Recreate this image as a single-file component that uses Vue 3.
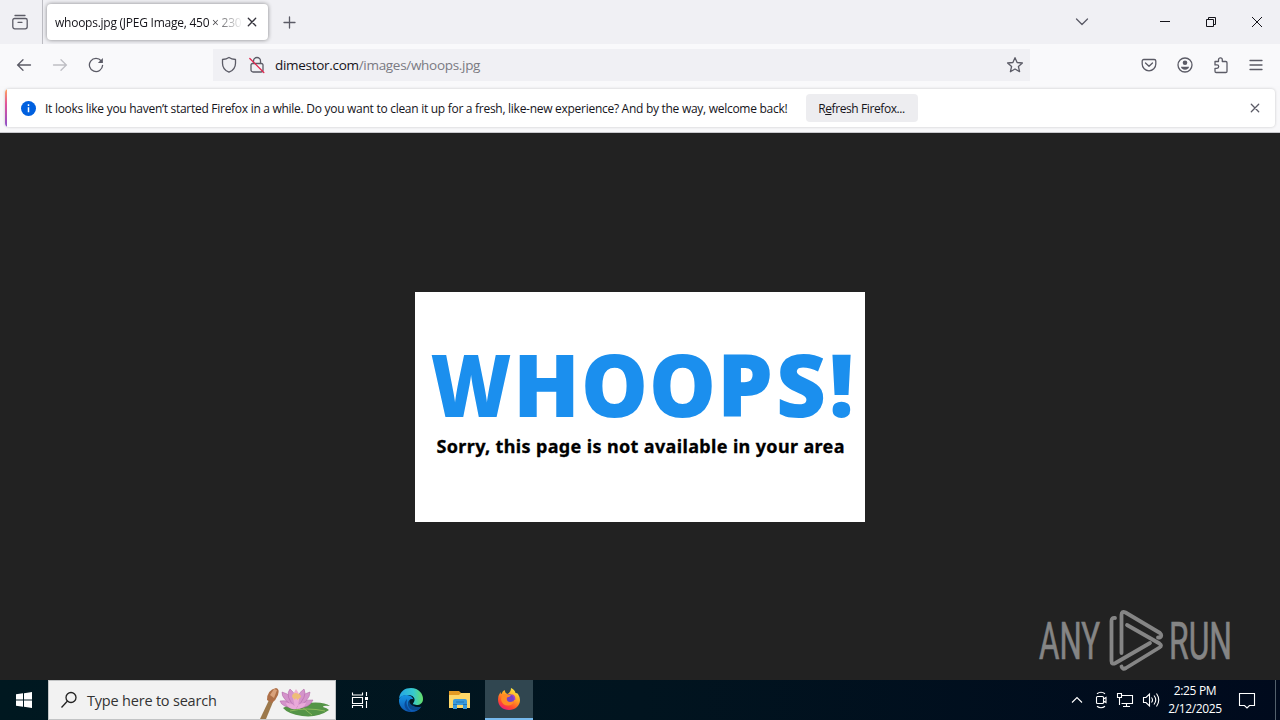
<template>
  <div class="screen">
    <!-- 标签栏 -->
    <header class="tab-bar">
      <div class="firefox-view">
        <svg width="18" height="18" viewBox="0 0 18 18" class="line">
          <path d="M4 2.5h10M3.5 5.5h11a1.7 1.7 0 0 1 1.7 1.7v6.6a2 2 0 0 1-2 2H3.8a2 2 0 0 1-2-2V7.2a1.7 1.7 0 0 1 1.7-1.7zM7 9.3h4" />
        </svg>
      </div>
      <div class="tab">
        <span class="tab-title">whoops.jpg (JPEG Image, 450 × 230 pixels)</span>
        <svg width="10" height="10" viewBox="0 0 10 10" class="line dark"><path d="M1.300 1.300l7.400 7.400M8.700 1.300L1.300 8.700" /></svg>
      </div>
      <svg class="line new-tab" width="13" height="13" viewBox="0 0 13 13"><path d="M6.5 1v11M1 6.500h11" /></svg>
      <svg class="line all-tabs" width="14" height="8" viewBox="0 0 14 8"><path d="M1.5 1L7 6.5 12.5 1" /></svg>
      <div class="window-buttons">
        <svg width="12" height="12" viewBox="0 0 12 12"><path d="M1 5.5h10" /></svg>
        <svg width="12" height="12" viewBox="0 0 12 12"><path d="M1.5 3.5h7v7h-7zM3.5 3.5v-2h7v7h-2" /></svg>
        <svg width="12" height="12" viewBox="0 0 12 12"><path d="M1 1l10 10M11 1L1 11" /></svg>
      </div>
    </header>

    <!-- 导航栏 -->
    <nav class="nav-bar">
      <div class="nav-left">
        <svg width="16" height="16" viewBox="0 0 16 16" class="line"><path d="M14.500 8H1.500M7 2.700L1.700 8 7 13.300" /></svg>
        <svg width="16" height="16" viewBox="0 0 16 16" class="line disabled"><path d="M1.500 8h13M9 2.700L14.300 8 9 13.300" /></svg>
        <svg width="16" height="16" viewBox="0 0 16 16" class="line">
          <path d="M13.300 4A6.600 6.600 0 1 0 14.600 8.300" />
          <path d="M14.900 1v5h-5z" class="filled" />
        </svg>
      </div>
      <div class="url-bar">
        <svg width="16" height="18" viewBox="0 0 16 18" class="line"><path d="M8 1.500C6 2.800 3.600 3.300 1.500 3.500v3.700c0 4.200 2.600 7.400 6.500 9 3.900-1.600 6.500-4.800 6.500-9V3.500C12.400 3.300 10 2.800 8 1.500z" /></svg>
        <svg width="16" height="18" viewBox="0 0 16 18" class="line lock">
          <path d="M4.500 7.500V5a3.500 3.500 0 0 1 7 0v2.500M3.500 7.500h9a1.500 1.500 0 0 1 1.500 1.500v5a2 2 0 0 1-2 2H4a2 2 0 0 1-2-2V9a1.500 1.500 0 0 1 1.500-1.500z" />
          <path d="M.8 2.500l14 14" class="strike" />
        </svg>
        <span class="url"><b>dimestor.com</b>/images/whoops.jpg</span>
        <svg width="18" height="18" viewBox="0 0 18 18" class="line star"><path d="M9 1.700l2.100 4.800 5.300.5-4 3.500 1.200 5.200L9 13l-4.600 2.700 1.200-5.200-4-3.500 5.300-.5z" /></svg>
      </div>
      <div class="nav-right">
        <svg width="16" height="16" viewBox="0 0 16 16" class="line"><path d="M2.800 2.500h10.400a1.600 1.600 0 0 1 1.600 1.600V7a6.800 6.800 0 0 1-13.600 0V4.100a1.600 1.600 0 0 1 1.600-1.600zM4.500 6L8 9.300 11.500 6" /></svg>
        <svg width="16" height="16" viewBox="0 0 16 16" class="line">
          <circle cx="8" cy="8" r="7" />
          <circle cx="8" cy="5.800" r="2.300" class="filled" />
          <path d="M4 9.800h8c0 1.600-1.800 2.900-4 2.900s-4-1.300-4-2.900z" class="filled" />
        </svg>
        <svg width="16" height="18" viewBox="0 0 16 18" class="line"><path d="M2 5.500h3.500V3.700a1.900 1.900 0 0 1 3.800 0v1.800h3.500a1.200 1.200 0 0 1 1.200 1.200v8.600a1.200 1.200 0 0 1-1.200 1.200H3.200A1.200 1.200 0 0 1 2 15.300v-3h2a1.700 1.700 0 0 0 0-3.400H2z" /></svg>
        <svg width="14" height="14" viewBox="0 0 14 14" class="line"><path d="M1 2.500h12M1 7h12M1 11.500h12" /></svg>
      </div>
    </nav>

    <!-- 通知栏 -->
    <section class="notice-area">
      <div class="notice">
        <svg width="15" height="15" viewBox="0 0 15 15">
          <circle cx="7.500" cy="7.500" r="7.500" fill="#0060df" />
          <path d="M7.500 3.300v1.600M7.500 6.300v5" stroke="#fff" stroke-width="1.500" />
        </svg>
        <span class="notice-text">It looks like you haven’t started Firefox in a while. Do you want to clean it up for a fresh, like-new experience? And by the way, welcome back!</span>
        <button class="refresh"><span>R<u>e</u>fresh Firefox...</span></button>
        <svg width="10" height="10" viewBox="0 0 10 10" class="line notice-close"><path d="M1.300 1.300l7.400 7.400M8.700 1.300L1.300 8.700" /></svg>
      </div>
    </section>

    <!-- 图片内容 -->
    <main class="viewer">
      <svg class="picture" width="450" height="230" viewBox="0 0 450 230">
        <rect width="450" height="230" fill="#fff" />
        <g class="headline">
          <text
            v-for="(item, index) in headline"
            :key="index"
            :x="item.x"
            y="125"
            :textLength="item.width"
            lengthAdjust="spacingAndGlyphs"
          >{{ item.letter }}</text>
        </g>
        <text class="subline" x="21.500" y="161" textLength="408" lengthAdjust="spacing">Sorry, this page is not available in your area</text>
      </svg>

      <!-- 右下角水印 -->
      <svg class="watermark" width="205" height="70" viewBox="0 0 205 70">
        <text x="4" y="54" textLength="61" lengthAdjust="spacingAndGlyphs">ANY</text>
        <text x="134" y="54" textLength="63" lengthAdjust="spacingAndGlyphs">RUN</text>
        <g class="mark">
          <path d="M80 13q-3.500-.5-3.500 3v40q0 4 4 2L115 38" />
          <path d="M86.500 48V10q0-4.500 4-2.500l34.500 20.500q2.500 2.500 0 4.500l-2 0" />
          <path d="M92 20l32.500 18.500q3 2 0 4L91 63q-3.500 2-4.500-1.500" />
        </g>
      </svg>
    </main>

    <!-- 任务栏 -->
    <footer class="taskbar">
      <div class="start">
        <svg width="16" height="16" viewBox="0 0 16 16" fill="#fff"><path d="M0 2.300L7 1.300v6.200H0zM8 1.200L16 0v7.500H8zM0 8.500h7v6.200l-7-1zM8 8.500h8V16l-8-1.200z" /></svg>
      </div>
      <div class="search">
        <svg width="18" height="18" viewBox="0 0 18 18" class="magnifier"><circle cx="11" cy="6.500" r="5" /><path d="M7.500 10L1.500 16.500" /></svg>
        <span>Type here to search</span>
        <svg class="lotus" width="76" height="38" viewBox="0 0 76 38">
          <path d="M1 38L10 19l4 2-7 17z" fill="#9c794c" />
          <path d="M8 19q0-10 9-12 4 1 2 7-2 5-6 8z" fill="#ae7048" />
          <path d="M11 14l4-6 3 1-3 8z" fill="#d9a27b" />
          <path d="M24 27q8-5 23-5 18-2 24 3-7-1-7 1 4 1 6 3-11 8-27 6-14-2-19-8z" fill="#559447" />
          <path d="M31 30q17-4 35 0M43 26l10 8" fill="none" stroke="#8dbb5c" />
          <g fill="#d493cb" stroke="#ad5fa3" stroke-width=".5">
            <path d="M37 27q-14 0-16-7 10-2 16 7z" /><path d="M37 27q13 1 17-8-10-1-17 8z" />
            <path d="M37 27Q22 18 23 11q10 2 14 16z" /><path d="M37 27q14-7 14-16-10 2-14 16z" />
            <path d="M37 27q-12-12-6-19 8 6 6 19z" /><path d="M37 27q12-12 8-19-9 6-8 19z" />
          </g>
          <path d="M37 25q-6-9 0-17 7 8 0 17z" fill="#efb1cf" />
          <path d="M33 16q0-4 4-4 5 1 5 4l-5 4z" fill="#eebd78" />
          <path d="M37 28q-8 1-10-6 8-1 10 6zm0 0q8 0 10-6-8-1-10 6zm0 0q-4-6 0-11 5 6 0 11z" fill="#e9a9da" />
        </svg>
      </div>
      <div class="app">
        <svg width="18" height="18" viewBox="0 0 18 18" class="tray-line"><path d="M1.500 1.500V4h10V1.500M1.500 6.500h10v6h-10zM1.500 17v-2.500h10V17M15.500 1v4M15.500 10v7" /><path d="M14 6h3v3h-3z" class="solid" /></svg>
      </div>
      <div class="app edge">
        <svg width="26" height="26" viewBox="0 0 26 26">
          <defs>
            <linearGradient id="edgeTop" x1="0" y1="0" x2="1" y2="0"><stop stop-color="#23a4e5" /><stop offset=".6" stop-color="#37c9ce" /><stop offset="1" stop-color="#65df68" /></linearGradient>
            <linearGradient id="edgeLow" x1="0" y1="0" x2="0" y2="1"><stop stop-color="#1595e4" /><stop offset="1" stop-color="#0d57b2" /></linearGradient>
          </defs>
          <path d="M1 11.500C2 4 7 1 13 1c8 0 12 6 12 11 0 4-3 6-6.500 6-3 0-4.200-1.200-3-2.400 2.500-3 .5-7-4-7.600C7 7.500 3 9 1 11.500z" fill="url(#edgeTop)" />
          <path d="M1 12.500C2 9 5.500 7.700 9 8c3.500.3 6 2.300 6.500 4.500-5-2-7 5-3 8.500 3 2.300 7 2 10.500-1-2 3-5.500 5-9.500 5C5 25 .5 19 1 12.500z" fill="url(#edgeLow)" />
          <path d="M9 12q-2 8 4.500 13C7 24 4 17 9 12z" fill="#0a4a98" />
          <path d="M12 12.500q-3 3-1.500 7 3 5 9 3.500 2.500-1 4-3.500-5 1.500-8.500-1-2.500-3 0-4.500-.500-2-3-1.500z" fill="#0b4a8c" />
          <path d="M15 12q-3.500-.5-3.500 3 .5 2.500 3.500 4-1-2 .2-3.200 1-1.500-.2-3.800z" fill="#021820" />
        </svg>
      </div>
      <div class="app">
        <svg width="24" height="22" viewBox="0 0 24 22">
          <path d="M1 2h10l2 2h9v5H1z" fill="#e49b23" />
          <path d="M1 6h10l2-2h9v15H1z" fill="#ffd869" />
          <path d="M5 20v-8q0-2 2-2h10q2 0 2 2v8h-4v-4H9v4z" fill="#3c9bdb" />
          <path d="M5 15.500h4M15 15.500h4M8 13h8" stroke="#2376b3" />
        </svg>
      </div>
      <div class="app active">
        <svg width="24" height="24" viewBox="0 0 24 24">
          <defs><linearGradient id="fox" x1=".8" y1="0" x2=".25" y2="1"><stop stop-color="#fff044" /><stop offset=".4" stop-color="#ffa522" /><stop offset=".75" stop-color="#ff4b2b" /><stop offset="1" stop-color="#ed1681" /></linearGradient></defs>
          <path d="M14 1q4 2 4.500 5 2 0 2.500 1 2 3 2 6c0 6-5 10-11 10S1 19 1 12.500q0-4 2.500-7.500 0 2 1 2 1-3 3-4 .5 3 3 4Q14 5 14 1z" fill="url(#fox)" />
          <circle cx="12.500" cy="12" r="4.800" fill="#7542c8" />
          <path d="M5 7.500q3-1 6 .5h3q-1 2-4 2.500-1 4 3 4.500 2 0 4-1.500-1 5-6 5-6 0-7-6z" fill="#ff8b25" />
          <path d="M15 8q3 1 2.500 5" fill="none" stroke="#a644c7" stroke-width="1.500" />
        </svg>
      </div>
      <div class="tray">
        <svg width="12" height="8" viewBox="0 0 12 8" class="tray-line"><path d="M1 6.500l5-5 5 5" /></svg>
        <svg width="14" height="18" viewBox="0 0 14 18" class="tray-line"><path d="M3.500 5.500h5a1 1 0 0 1 1 1v5a1 1 0 0 1-1 1h-5a1 1 0 0 1-1-1v-5a1 1 0 0 1 1-1zM9.500 8l2.500-1.500v5L9.500 10M3 2.700q4-3 8 0M3 15.300q4 3 8 0" /></svg>
        <svg width="18" height="16" viewBox="0 0 18 16" class="tray-line"><path d="M6 3.500h10.500v8H5.500M10.500 11.500v3M7 14.500h7M1.500 1.500h4v4h-4zM3.500 5.500v7.500" /></svg>
        <svg width="18" height="16" viewBox="0 0 18 16" class="tray-line"><path d="M1.500 5.500h2.500l3.500-3.500v12L4 10.500H1.500zM9.500 5.500q2 2.500 0 5M12 3.500q3.500 4.500 0 9M14.500 1.500q4.500 6.500 0 13" /></svg>
      </div>
      <div class="clock">
        <span>2:25 PM</span>
        <span class="date">2/12/2025</span>
      </div>
      <svg width="18" height="18" viewBox="0 0 18 18" class="tray-line action"><path d="M1.500 2.500h15v12h-5l-2.500 2.500-2.500-2.500h-5z" /></svg>
      <i class="show-desktop"></i>
    </footer>
  </div>
</template>

<script setup>
// 标题每个字母的位置和宽度
const headline = [
  { letter: "W", x: 15.5, width: 81 },
  { letter: "H", x: 98, width: 67 },
  { letter: "O", x: 166, width: 67 },
  { letter: "O", x: 234, width: 67 },
  { letter: "P", x: 302, width: 56 },
  { letter: "S", x: 361, width: 50 },
  { letter: "!", x: 414, width: 25 },
];
</script>

<style>
body {
  margin: 0;
  overflow: hidden;
}
</style>

<style scoped>
.screen {
  width: 1280px;
  height: 720px;
  display: flex;
  flex-direction: column;
  overflow: hidden;
  font-family: "Open Sans", "Noto Sans", sans-serif;
  font-size: 12px;
  color: #15141a;
}

svg {
  display: block;
  flex: none;
}

.line {
  fill: none;
  stroke: #5b5b66;
  stroke-width: 1.3;
  stroke-linecap: round;
  stroke-linejoin: round;
}

.line.dark {
  stroke: #33323b;
}

.line.disabled {
  stroke: #bebec4;
}

.filled {
  fill: #5b5b66;
  stroke: none;
}

/* 标签栏 */
.tab-bar {
  height: 44px;
  display: flex;
  align-items: center;
  background: #f0f0f4;
}

.firefox-view {
  width: 43px;
  height: 44px;
  box-sizing: border-box;
  padding-right: 2px;
  display: flex;
  align-items: center;
  justify-content: center;
  border-right: 1px solid #bcbcc2;
}

.tab {
  width: 221px;
  height: 36px;
  margin-left: 4px;
  padding: 0 11px 0 8px;
  box-sizing: border-box;
  display: flex;
  align-items: center;
  justify-content: space-between;
  background: #fff;
  border-radius: 4px;
  box-shadow: 0 0 4px rgba(0, 0, 0, 0.45);
}

.tab-title {
  width: 188px;
  overflow: hidden;
  white-space: nowrap;
  letter-spacing: -0.25px;
  mask-image: linear-gradient(to left, transparent, #000 35px);
}

.new-tab {
  margin-left: 15px;
}

.all-tabs {
  margin-left: auto;
}

.window-buttons {
  display: flex;
  gap: 34px;
  margin: 0 17px 0 70px;
}

.window-buttons svg {
  fill: none;
  stroke: #15141a;
}

/* 导航栏 */
.nav-bar {
  height: 42px;
  box-sizing: border-box;
  padding-bottom: 1px;
  display: flex;
  align-items: center;
  background: #f9f9fb;
}

.nav-left {
  width: 197px;
  padding-left: 16px;
  display: flex;
  gap: 20px;
}

.url-bar {
  width: 817px;
  height: 32px;
  box-sizing: border-box;
  padding: 0 6px 0 8px;
  display: flex;
  align-items: center;
  background: #f0f0f4;
}

.lock {
  margin-left: 12px;
}

.strike {
  stroke: #e22850;
}

.url {
  margin-left: 10px;
  font-size: 13.5px;
  letter-spacing: -0.3px;
  color: #7a7a82;
}

.url b {
  font-weight: 400;
  color: #15141a;
}

.star {
  margin-left: auto;
}

.nav-right {
  margin-left: auto;
  padding-right: 17px;
  display: flex;
  align-items: center;
  gap: 20px;
}

/* 通知栏 */
.notice-area {
  height: 47px;
  box-sizing: border-box;
  padding: 3px 5px 5px;
  background: #f8f8fa;
  border-bottom: 1px solid #c9c9cd;
}

.notice {
  position: relative;
  height: 38px;
  padding: 0 15px 0 16px;
  display: flex;
  align-items: center;
  background: #fff;
  border-radius: 4px;
  overflow: hidden;
  box-shadow: 0 0 3px rgba(0, 0, 0, 0.2);
}

.notice::before {
  content: "";
  position: absolute;
  left: 0;
  top: 0;
  width: 2px;
  height: 100%;
  background: linear-gradient(#ffa45c, #e0529c 40%, #8b50c9);
}

.notice-text {
  margin-left: 9px;
  width: 743px;
  white-space: nowrap;
  letter-spacing: -0.28px;
}

.refresh {
  width: 112px;
  height: 28px;
  margin-left: 18px;
  padding: 0 1px 0 0;
  border: none;
  border-radius: 4px;
  background: #ededf0;
  color: #15141a;
  font: inherit;
  letter-spacing: -0.4px;
}

.notice-close {
  margin-left: auto;
}

/* 图片内容 */
.viewer {
  position: relative;
  flex: 1;
  display: flex;
  align-items: center;
  justify-content: center;
  background: #222;
}

.headline {
  font-family: "Open Sans", sans-serif;
  font-size: 87px;
  font-weight: 800;
  fill: #1b8fee;
}

.subline {
  font-family: "Noto Sans", sans-serif;
  font-size: 18px;
  font-weight: 700;
  stroke: #000;
  stroke-width: 0.3;
}

.watermark {
  position: absolute;
  right: 40px;
  bottom: 5px;
  font-family: "Roboto", sans-serif;
  font-size: 52px;
  fill: #858585;
  stroke: #858585;
  stroke-width: 0.7;
}

.mark {
  fill: none;
  stroke: #858585;
  stroke-width: 3.8;
  stroke-linecap: round;
  stroke-linejoin: round;
}

/* 任务栏 */
.taskbar {
  height: 40px;
  display: flex;
  align-items: center;
  background: linear-gradient(to right, #001820, #01141f 50%, #000a1d);
  color: #fff;
}

.start {
  width: 48px;
  display: flex;
  justify-content: center;
}

.search {
  width: 288px;
  height: 40px;
  box-sizing: border-box;
  padding-left: 11px;
  display: flex;
  align-items: center;
  background: #f2f2f2;
  border: 1px solid #c2c4c5;
  color: #333;
  font-size: 14.5px;
  letter-spacing: -0.2px;
}

.search span {
  margin-left: 9px;
}

.magnifier {
  fill: none;
  stroke: #222;
  stroke-width: 1.3;
}

.lotus {
  margin-left: auto;
}

.app {
  width: 48px;
  height: 40px;
  margin-right: 2px;
  box-sizing: border-box;
  display: flex;
  align-items: center;
  justify-content: center;
}

.app.edge {
  padding-left: 2px;
}

.app.active {
  margin-left: -1px;
  background: #304650;
  border-bottom: 2px solid #76b9ed;
}

.tray-line {
  fill: none;
  stroke: #fff;
  stroke-width: 1.1;
}

.solid {
  fill: #fff;
  stroke: none;
}

.tray {
  margin-left: auto;
  display: flex;
  align-items: center;
  gap: 8px;
}

.clock {
  width: 70px;
  display: flex;
  flex-direction: column;
  align-items: center;
  line-height: 18px;
  letter-spacing: -0.35px;
}

.action {
  margin-left: 8px;
}

.tray svg:first-child {
  margin-right: 3px;
}

.show-desktop {
  width: 4px;
  height: 40px;
  margin-left: 19px;
  border-left: 1px solid #53606c;
}
</style>
